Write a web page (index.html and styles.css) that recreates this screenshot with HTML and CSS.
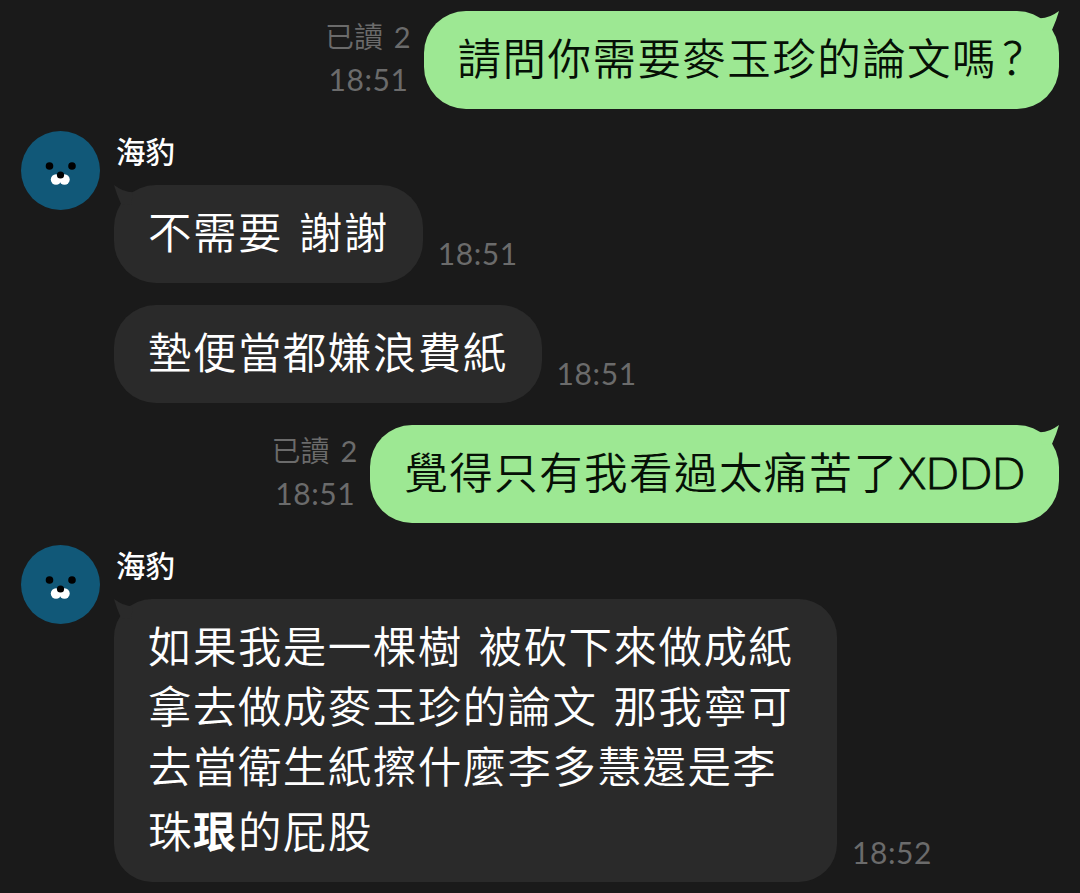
FILE: index.html
```html
<!DOCTYPE html>
<html lang="zh-Hant">

<head>
  <meta charset="UTF-8" />
  <meta name="viewport" content="width=device-width, initial-scale=1.0" />
  <title>海豹</title>
  <link rel="stylesheet" href="styles.css">
</head>

<body>
  <main class="chat">
    <div class="row mine">
      <div class="meta"><span class="read">已讀 <span class="count">2</span></span><time>18:51</time></div>
      <div class="bubble">請問你需要麥玉珍的論文嗎<span class="latin question">?</span>
        <svg class="tail" viewBox="0 0 24 22"><path d="M5 7.3Q14 7.500 24 0Q21.500 9 17 19L7 20Z" /></svg>
      </div>
    </div>

    <section class="group">
      <svg class="avatar" viewBox="0 0 79 79">
        <circle class="skin" cx="39.500" cy="39.500" r="39.500" />
        <circle cx="28.500" cy="35" r="3.800" />
        <circle cx="51" cy="35" r="3.800" />
        <circle class="mouth" cx="35" cy="48.500" r="5.200" />
        <circle class="mouth" cx="43.500" cy="48.500" r="5.200" />
        <circle cx="39.500" cy="44" r="3.600" />
      </svg>
      <div class="messages">
        <div class="name">海豹</div>
        <div class="row">
          <div class="bubble">不需要<span class="gap"> </span>謝謝
            <svg class="tail" viewBox="0 0 24 22"><path d="M5 7.3Q14 7.500 24 0Q21.500 9 17 19L7 20Z" /></svg>
          </div>
          <div class="meta"><time>18:51</time></div>
        </div>
        <div class="row">
          <div class="bubble">墊便當都嫌浪費紙</div>
          <div class="meta"><time>18:51</time></div>
        </div>
      </div>
    </section>

    <div class="row mine">
      <div class="meta"><span class="read">已讀 <span class="count">2</span></span><time>18:51</time></div>
      <div class="bubble">覺得只有我看過太痛苦了<span class="latin">XDDD</span>
        <svg class="tail" viewBox="0 0 24 22"><path d="M5 7.3Q14 7.500 24 0Q21.500 9 17 19L7 20Z" /></svg>
      </div>
    </div>

    <section class="group">
      <svg class="avatar" viewBox="0 0 79 79">
        <circle class="skin" cx="39.500" cy="39.500" r="39.500" />
        <circle cx="28.500" cy="35" r="3.800" />
        <circle cx="51" cy="35" r="3.800" />
        <circle class="mouth" cx="35" cy="48.500" r="5.200" />
        <circle class="mouth" cx="43.500" cy="48.500" r="5.200" />
        <circle cx="39.500" cy="44" r="3.600" />
      </svg>
      <div class="messages">
        <div class="name">海豹</div>
        <div class="row">
          <div class="bubble long">如果我是一棵樹<span class="gap"> </span>被砍下來做成紙<br>拿去做成麥玉珍的論文<span class="gap"> </span>那我寧可<br>去當衛生紙擦什麼李多慧還是李<br>珠<b class="rare">珢</b>的屁股
            <svg class="tail" viewBox="0 0 24 22"><path d="M5 7.3Q14 7.500 24 0Q21.500 9 17 19L7 20Z" /></svg>
          </div>
          <div class="meta"><time>18:52</time></div>
        </div>
      </div>
    </section>
  </main>
</body>

</html>
```
FILE: styles.css
```css
* {
  box-sizing: border-box;
}

body {
  margin: 0;
  background: #1a1a1a;
  color: white;
  font-family: Lato, "Noto Sans CJK TC", sans-serif;
}

.chat {
  height: 893px;
  padding: 11px 21px;
  display: flex;
  flex-direction: column;
  gap: 22px;
  overflow: hidden;
}

.row {
  display: flex;
  align-items: flex-end;
  gap: 15px;
}

.mine {
  justify-content: flex-end;
}

.group {
  display: flex;
  gap: 14px;
}

.messages {
  display: flex;
  flex-direction: column;
  gap: 22px;
}

.avatar {
  width: 79px;
  height: 79px;
  flex: none;
}

.skin {
  fill: #115878;
}

.mouth {
  fill: white;
}

.name {
  height: 32px;
  padding-left: 2px;
  font-family: "Noto Sans CJK TC", sans-serif;
  font-size: 29.500px;
  font-weight: 500;
  line-height: 39px;
}

.bubble {
  position: relative;
  padding: 16px 34px 22px 34px;
  border-radius: 42px;
  background: #2a2a2a;
  font-family: "Noto Sans CJK TC", sans-serif;
  font-size: 43.500px;
  font-weight: 350;
  line-height: 60px;
  letter-spacing: 1.450px;
  white-space: nowrap;
}

.mine .bubble {
  background: #9de893;
  color: #061006;
}

.long {
  width: 723px;
  border-radius: 38px;
}

.latin {
  font-family: Lato, sans-serif;
  font-size: 43.500px;
  font-weight: 300;
  line-height: 0;
  letter-spacing: 0;
  -webkit-text-stroke: 1px #061006;
}

.question {
  display: inline-block;
  width: 28px;
  padding-right: 2px;
  font-size: 48px;
  text-align: right;
}

.gap {
  display: inline-block;
  width: 16px;
}

.rare {
  display: inline-block;
  padding-top: 5px;
  font-weight: 700;
}

.tail {
  position: absolute;
  top: 0;
  left: 0;
  width: 24px;
  height: 22px;
  fill: #2a2a2a;
  transform: scaleX(-1);
}

.mine .tail {
  left: auto;
  right: 0;
  fill: #9de893;
  transform: none;
}

.meta {
  display: flex;
  flex-direction: column;
  align-items: flex-end;
  padding-bottom: 9px;
  color: #6b6b6b;
  font-size: 30px;
  line-height: 42px;
  letter-spacing: 0.600px;
}

.read {
  margin-right: -2px;
  font-size: 29px;
  font-weight: 350;
  letter-spacing: 0;
  word-spacing: 3px;
}

.count {
  font-weight: 400;
}
```
